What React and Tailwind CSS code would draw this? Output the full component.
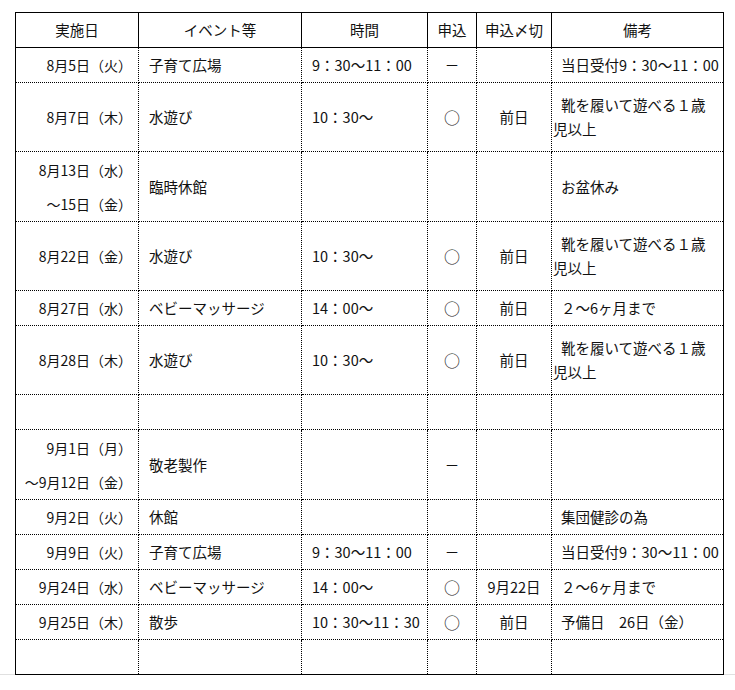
import React from "react";

const rows = [
  { h: "h-[35px]", date: ["8月5日（火）"], ev: "子育て広場", time: "9：30～11：00", mo: "－", dl: "", rm: ["当日受付9：30～11：00"] },
  { h: "h-[69px]", date: ["8月7日（木）"], ev: "水遊び", time: "10：30～", mo: "○", dl: "前日", rm: ["靴を履いて遊べる１歳", "児以上"] },
  { h: "h-[70px]", date: ["8月13日（水）", "～15日（金）"], ev: "臨時休館", time: "", mo: "", dl: "", rm: ["お盆休み"] },
  { h: "h-[69px]", date: ["8月22日（金）"], ev: "水遊び", time: "10：30～", mo: "○", dl: "前日", rm: ["靴を履いて遊べる１歳", "児以上"] },
  { h: "h-[35px]", date: ["8月27日（水）"], ev: "ベビーマッサージ", time: "14：00～", mo: "○", dl: "前日", rm: ["２～6ヶ月まで"] },
  { h: "h-[69px]", date: ["8月28日（木）"], ev: "水遊び", time: "10：30～", mo: "○", dl: "前日", rm: ["靴を履いて遊べる１歳", "児以上"] },
  { h: "h-[35px]", date: [], ev: "", time: "", mo: "", dl: "", rm: [] },
  { h: "h-[70px]", date: ["9月1日（月）", "～9月12日（金）"], ev: "敬老製作", time: "", mo: "－", dl: "", rm: [] },
  { h: "h-[35px]", date: ["9月2日（火）"], ev: "休館", time: "", mo: "", dl: "", rm: ["集団健診の為"] },
  { h: "h-[35px]", date: ["9月9日（火）"], ev: "子育て広場", time: "9：30～11：00", mo: "－", dl: "", rm: ["当日受付9：30～11：00"] },
  { h: "h-[35px]", date: ["9月24日（水）"], ev: "ベビーマッサージ", time: "14：00～", mo: "○", dl: "9月22日", rm: ["２～6ヶ月まで"] },
  { h: "h-[35px]", date: ["9月25日（木）"], ev: "散歩", time: "10：30～11：30", mo: "○", dl: "前日", rm: ["予備日　26日（金）"] },
  { h: "h-[34px]", date: [], ev: "", time: "", mo: "", dl: "", rm: [], last: true },
];

const cols = "grid grid-cols-[123px_163px_126px_49px_75px_171px]";

function Row({ r }) {
  const bb = r.last ? "" : "border-b border-dotted border-black";
  const cell = `${bb} border-r border-dotted border-black flex items-center`;
  return (
    <div className={`${cols} ${r.h}`}>
      <div className={`${cell} flex-col justify-center items-end pr-[6px] leading-[34px] text-[14px]`}>
        {r.date.map((d, i) => (
          <div key={i} className="whitespace-nowrap">{d}</div>
        ))}
      </div>
      <div className={`${cell} pl-[10px] whitespace-nowrap`}>{r.ev}</div>
      <div className={`${cell} pl-[10px] whitespace-nowrap`}>{r.time}</div>
      <div className={`${cell} justify-center`}>
        {r.mo === "○" ? <span className="text-[16px] leading-none">○</span> : r.mo}
      </div>
      <div className={`${cell} justify-center whitespace-nowrap`}>{r.dl}</div>
      <div className={`${bb} flex flex-col justify-center leading-[24px]`}>
        {r.rm.length === 2 ? (
          <>
            <div className="pl-[9px] whitespace-nowrap">{r.rm[0]}</div>
            <div className="pl-[1px] whitespace-nowrap">{r.rm[1]}</div>
          </>
        ) : (
          r.rm.map((t, i) => (
            <div key={i} className="pl-[9px] whitespace-nowrap">{t}</div>
          ))
        )}
      </div>
    </div>
  );
}

export default function App() {
  const head = ["実施日", "イベント等", "時間", "申込", "申込〆切", "備考"];
  return (
    <div
      className="bg-white w-[735px] h-[690px] text-[#111] text-[14.5px]"
      style={{ fontFamily: '"Noto Sans CJK JP", "Noto Sans", sans-serif' }}
    >
      <div className="pt-[12px] border-b border-[#e0e0e0]">
        <div className="ml-[15px] w-[709px] border border-black mb-[-1px] relative bg-white">
          <div className={`${cols} h-[35px]`}>
            {head.map((t, i) => (
              <div
                key={i}
                className={`flex items-center justify-center border-b border-solid border-black ${
                  i < 5 ? "border-r border-r-black border-r-dotted" : ""
                }`}
              >
                {t}
              </div>
            ))}
          </div>
          {rows.map((r, i) => (
            <Row key={i} r={r} />
          ))}
        </div>
      </div>
    </div>
  );
}
